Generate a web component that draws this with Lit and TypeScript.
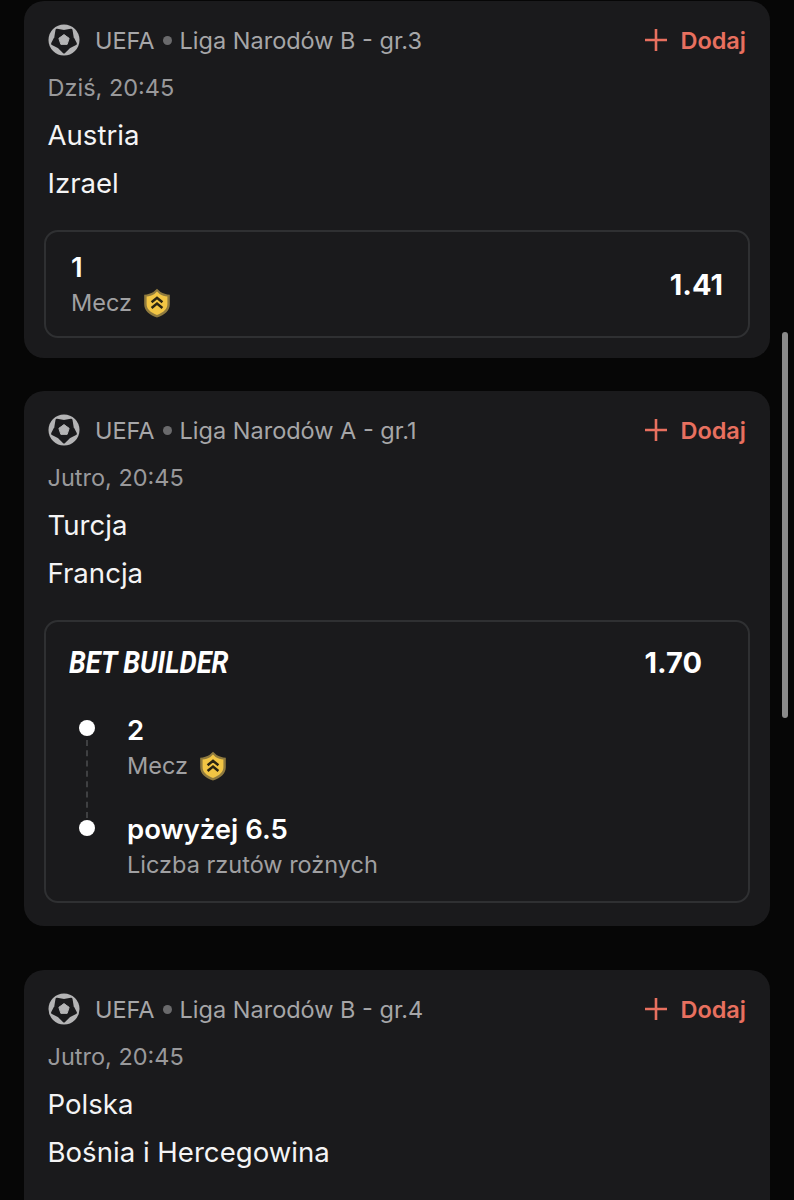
import { LitElement, html, css } from "lit";
import { customElement } from "lit/decorators.js";

function polar(r: number, deg: number) {
  const a = (deg * Math.PI) / 180;
  return `${(16 + r * Math.cos(a)).toFixed(2)} ${(16 + r * Math.sin(a)).toFixed(2)}`;
}
const starAngles = [-126, -90, -54, -18, 18, 54, 90, 126, 162, 198];
const starPath =
  "M" + starAngles.map((d, i) => polar(i % 2 === 0 ? 12 : 8.6, d)).join("L") + "Z";
const pentPath =
  "M" + [-90, -18, 54, 126, 198].map((d) => polar(5.4, d)).join("L") + "Z";

const ball = html`<svg class="ball" viewBox="0 0 32 32" aria-hidden="true">
  <circle cx="16" cy="16" r="15.5" fill="#b4b4b5"/>
  <path d=${starPath} fill="#1a1a1c" stroke="#1a1a1c" stroke-width="3" stroke-linejoin="round"/>
  <path d=${pentPath} fill="#b4b4b5" stroke="#b4b4b5" stroke-width="1" stroke-linejoin="round"/>
</svg>`;

const plus = html`<svg class="plus" viewBox="0 0 22 22" aria-hidden="true"><path d="M11 0v22M0 11h22" stroke="#e8705f" stroke-width="2.6" fill="none"/></svg>`;

const shield = html`<svg class="shield" viewBox="1 0 26 30" aria-hidden="true">
  <path d="M14 .8l3.600 3.200c2.600 1.600 5.600 2.500 9.200 2.700v9.600c0 6-4.800 10.600-12.800 13.200C6 27 1.200 22.400 1.200 16.300V6.700C4.800 6.500 7.800 5.600 10.400 4z" fill="#8f7a3e"/>
  <path d="M14 3.600l2.600 2.300c2.400 1.500 5 2.300 7.800 2.600v7.600c0 4.800-3.600 8.500-10.400 10.900C7.200 24.600 3.600 20.900 3.600 16.100V8.500c2.800-.3 5.400-1.100 7.800-2.600z" fill="#f2c544"/>
  <path d="M8.600 14.200L14 9.800l5.400 4.400M8.600 20L14 15.600 19.400 20" fill="none" stroke="#2a2412" stroke-width="2.500"/>
</svg>`;

interface Match {
  league: string;
  time: string;
  teams: string[];
}

@customElement("app-root")
export class AppRoot extends LitElement {
  static styles = css`
    :host {
      display: block;
      position: relative;
      width: 794px;
      height: 1200px;
      overflow: hidden;
      background: #060606;
      font-family: Inter, "Liberation Sans", sans-serif;
      font-size: 23.5px;
      color: #fff;
    }
    .list { padding: 1px 24px 0; display: flex; flex-direction: column; }
    .card {
      background: #1a1a1c;
      border-radius: 20px;
      padding: 15px 20px 20px;
      flex: none;
    }
    .gap-a { margin-bottom: 33px; }
    .gap-b { margin-bottom: 45px; padding-bottom: 23px; }
    .last { padding-bottom: 60px; margin-top: -1px; }
    .head { display: flex; align-items: center; height: 48px; padding: 0 4px; }
    .ball { width: 32px; height: 32px; flex: none; margin-right: 15px; }
    .league { color: #a6a6a8; white-space: pre; display: flex; align-items: center; }
    .sep { width: 9px; height: 9px; border-radius: 50%; background: #6a6a6c; margin: 0 8px; }
    .add { margin-left: auto; display: flex; align-items: center; color: #e8705f; font-weight: 600; }
    .plus { width: 22px; height: 22px; margin-right: 13px; }
    .time { color: #99999b; height: 48px; line-height: 48px; padding: 0 3.5px; }
    .team { height: 48px; line-height: 47px; padding: 0 3.5px; color: #f4f4f5; font-size: 27.6px; }
    .box {
      margin-top: 22px;
      border: 2px solid #2f3032;
      border-radius: 14px;
    }
    .single { height: 108px; box-sizing: border-box; padding: 2px 25px 0; display: flex; align-items: center; justify-content: space-between; }
    .single .odds { margin-top: -2px; }
    .pick { font-size: 27.5px; font-weight: 600; line-height: 36px; }
    .market { color: #a0a0a2; display: flex; align-items: center; line-height: 36px; }
    .shield { width: 26px; height: 30px; margin-left: 12px; }
    .odds { font-size: 29px; font-weight: 700; }
    .builder { height: 283px; box-sizing: border-box; padding: 20px 46px 0 23px; }
    .b-head { display: flex; justify-content: space-between; align-items: center; height: 40px; }
    .b-title {
      font-family: Roboto, "Liberation Sans", sans-serif;
      font-weight: 700;
      font-style: italic;
      font-size: 32px;
      display: inline-block;
      transform: scaleX(0.85);
      transform-origin: left center;
      white-space: nowrap;
    }
    .legs { margin-top: 29px; position: relative; }
    .leg { display: flex; height: 100px; }
    .leg-text-first { padding-top: 1px; }
    .rail { width: 58px; flex: none; position: relative; }
    .dot { position: absolute; left: 10px; top: 9px; width: 16px; height: 16px; border-radius: 50%; background: #fff; }
    .line { position: absolute; left: 17px; top: 29px; height: 78px; border-left: 2px dashed #3f4042; }
    .scroll { position: absolute; left: 782px; top: 332px; width: 6px; height: 386px; border-radius: 3px; background: #8a8a8a; }
  `;

  private header(m: Match) {
    return html`
      <div class="head">
        ${ball}
        <div class="league"><span>UEFA</span><span class="sep"></span><span>${m.league}</span></div>
        <div class="add">${plus}<span>Dodaj</span></div>
      </div>
      <div class="time">${m.time}</div>
      ${m.teams.map((t) => html`<div class="team">${t}</div>`)}
    `;
  }

  render() {
    const a: Match = { league: "Liga Narodów B - gr.3", time: "Dziś, 20:45", teams: ["Austria", "Izrael"] };
    const b: Match = { league: "Liga Narodów A - gr.1", time: "Jutro, 20:45", teams: ["Turcja", "Francja"] };
    const c: Match = { league: "Liga Narodów B - gr.4", time: "Jutro, 20:45", teams: ["Polska", "Bośnia i Hercegowina"] };
    return html`
      <div class="list">
        <section class="card gap-a">
          ${this.header(a)}
          <div class="box single">
            <div>
              <div class="pick">1</div>
              <div class="market">Mecz ${shield}</div>
            </div>
            <div class="odds">1.41</div>
          </div>
        </section>
        <section class="card gap-b">
          ${this.header(b)}
          <div class="box builder">
            <div class="b-head"><span class="b-title">BET BUILDER</span><span class="odds">1.70</span></div>
            <div class="legs">
              <div class="leg">
                <div class="rail"><span class="dot"></span><span class="line"></span></div>
                <div class="leg-text-first">
                  <div class="pick">2</div>
                  <div class="market">Mecz ${shield}</div>
                </div>
              </div>
              <div class="leg">
                <div class="rail"><span class="dot"></span></div>
                <div>
                  <div class="pick">powyżej 6.5</div>
                  <div class="market">Liczba rzutów rożnych</div>
                </div>
              </div>
            </div>
          </div>
        </section>
        <section class="card last">${this.header(c)}</section>
      </div>
      <div class="scroll"></div>
    `;
  }
}
